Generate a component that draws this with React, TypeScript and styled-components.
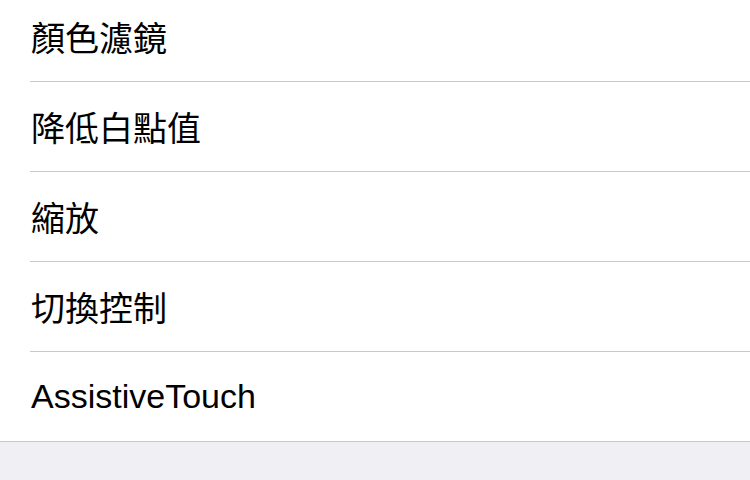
import React from "react";
import styled, { createGlobalStyle } from "styled-components";

const Global = createGlobalStyle`
  html, body { margin: 0; padding: 0; background: #efeff4; }
  body { width: 750px; height: 480px; overflow: hidden; }
`;

const Page = styled.div`
  width: 750px;
  height: 480px;
  background: #efeff4;
  overflow: hidden;
`;

const List = styled.ul`
  list-style: none;
  margin: -8px 0 0 0;
  padding: 0 0 0 30px;
  background: #ffffff;
  border-bottom: 1px solid #c8c7cc;
`;

const Row = styled.li<{ $last?: boolean }>`
  height: 89px;
  display: flex;
  align-items: center;
  padding-left: 1px;
  border-bottom: ${(p) => (p.$last ? "none" : "1px solid #c8c7cc")};
  font-family: "Liberation Sans", "Noto Sans CJK TC", sans-serif;
  font-size: 34px;
  color: #000;
`;

const items = ["顏色濾鏡", "降低白點值", "縮放", "切換控制", "AssistiveTouch"];

export default function App() {
  return (
    <Page>
      <Global />
      <List>
        {items.map((t, i) => (
          <Row key={t} $last={i === items.length - 1}>
            {t}
          </Row>
        ))}
      </List>
    </Page>
  );
}
